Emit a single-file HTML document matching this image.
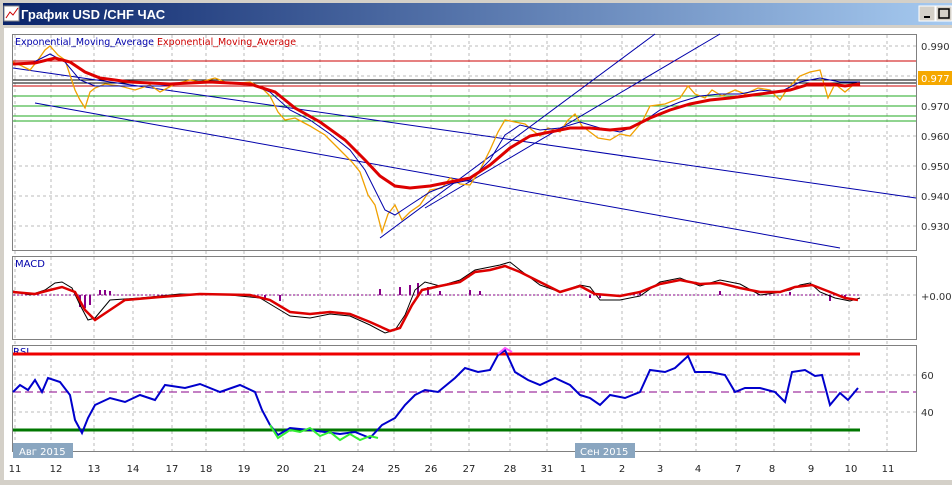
<!DOCTYPE html>
<html><head><meta charset="utf-8"><style>
body{margin:0;width:952px;height:485px;overflow:hidden;background:#d4d0c8;font-family:"Liberation Sans",sans-serif}
</style></head><body>
<svg width="952" height="485" xmlns="http://www.w3.org/2000/svg" style="position:absolute;left:0;top:0">
<defs><linearGradient id="tb" x1="0" x2="1"><stop offset="0" stop-color="#0a246a"/><stop offset="1" stop-color="#a6caf0"/></linearGradient></defs>
<rect x="0" y="0" width="952" height="485" fill="#d4d0c8"/>
<rect x="3" y="3" width="949" height="22" fill="url(#tb)"/>
<rect x="4" y="6" width="15" height="15" fill="#fff" stroke="#888"/>
<path d="M6 18 L10 12 L13 15 L18 8" stroke="#c00" fill="none"/>
<text x="21" y="19" font-size="13" font-weight="bold" fill="#fff" font-family="Liberation Sans,sans-serif">График USD /CHF  ЧАС</text>
<rect x="919" y="6" width="16" height="15" fill="#d4d0c8" stroke="#fff"/><rect x="924" y="16" width="6" height="2" fill="#000"/>
<rect x="936" y="6" width="16" height="15" fill="#d4d0c8" stroke="#fff"/><rect x="939" y="9" width="10" height="9" fill="none" stroke="#000" stroke-width="1.5"/>
<rect x="4" y="28" width="948" height="452" fill="#fff"/>
<g stroke="#808080" fill="none"><rect x="12.5" y="34.5" width="904" height="216"/><rect x="12.5" y="256.5" width="904" height="83"/><rect x="12.5" y="345.5" width="904" height="106"/></g>
<g stroke="#bbb" stroke-dasharray="3,3">
<path d="M15 35V451M51 35V451M94 35V451M133 35V451M172 35V451M206 35V451M244 35V451M283 35V451M320 35V451M358 35V451M394 35V451M431 35V451M469 35V451M510 35V451M547 35V451M581 35V451M622 35V451M660 35V451M696 35V451M736 35V451M774 35V451M811 35V451M849 35V451M887 35V451"/>
<path d="M13 46H916M13 76H916M13 106H916M13 136H916M13 166H916M13 196H916M13 226H916M13 295H916M13 375H916M13 412H916"/>
</g>
<g stroke-width="1">
<path d="M13 61H916M13 86H916" stroke="#c00"/>
<path d="M13 80H916M13 83H916" stroke="#000"/>
<path d="M13 96H916M13 106H916M13 116H916M13 121H916" stroke="#2a2"/>
<path d="M13 68L916 198M35 103L840 248M380 238L655 34M425 208L720 34" stroke="#00a"/>
</g>
<polyline fill="none" stroke="#f0a000" stroke-width="1.3" points="13,62 22,66 30,70 38,60 45,50 50,46 58,55 65,60 70,75 75,90 80,100 85,108 90,92 95,88 105,84 120,86 135,90 150,85 160,92 175,84 190,80 200,82 215,78 230,84 250,82 262,88 270,96 278,112 285,120 295,118 310,126 325,135 340,150 352,162 360,172 368,195 375,205 382,232 388,214 395,205 402,220 410,212 420,205 430,190 442,188 450,178 460,184 470,185 480,170 490,150 498,132 505,120 515,122 525,124 532,130 540,136 548,128 560,132 568,120 575,114 582,126 590,132 598,138 610,140 620,134 630,136 642,122 650,106 665,104 680,98 688,86 695,94 705,98 712,90 722,96 735,90 745,94 758,88 770,90 780,100 788,88 800,76 810,72 820,70 828,98 835,84 845,92 852,86 860,82"/>
<polyline fill="none" stroke="#00a" stroke-width="1" points="13,64 30,64 50,54 65,62 80,80 95,86 120,86 160,86 200,82 250,84 270,92 290,110 310,120 330,134 350,150 365,170 375,190 385,210 395,215 410,205 430,192 450,184 470,180 490,160 505,135 520,125 540,130 560,128 580,122 600,128 620,132 640,124 660,110 680,102 700,96 720,94 740,94 760,90 780,92 800,82 820,78 840,82 860,82"/>
<polyline fill="none" stroke="#d00" stroke-width="3" points="13,64 35,63 55,58 70,62 85,72 100,78 130,82 170,84 210,82 250,84 275,92 295,108 320,122 345,140 365,160 380,176 395,186 410,188 430,186 450,182 470,178 490,165 510,148 530,136 550,132 570,128 590,128 610,130 630,128 650,118 670,110 690,104 710,100 730,98 760,94 790,90 810,84 830,84 845,86 860,84"/>
<rect x="918" y="71" width="34" height="14" fill="#f5a800"/>
<g font-family="DejaVu Sans,sans-serif" font-size="10" fill="#333">
<text x="921" y="50">0.990</text><text x="921" y="82" fill="#fff">0.977</text><text x="921" y="110">0.970</text><text x="921" y="140">0.960</text><text x="921" y="170">0.950</text><text x="921" y="200">0.940</text><text x="921" y="230">0.930</text>
<text x="921" y="300">+0.00</text><text x="921" y="379">60</text><text x="921" y="416">40</text></g>
<text x="15" y="45" font-family="DejaVu Sans,sans-serif" font-size="9.5" fill="#00a">Exponential_Moving_Average <tspan fill="#c00">Exponential_Moving_Average</tspan></text>
<text x="15" y="267" font-family="DejaVu Sans,sans-serif" font-size="10" fill="#00a">MACD</text>
<text x="13" y="355" font-family="DejaVu Sans,sans-serif" font-size="10" fill="#00a">RSI</text>
<path d="M13 295H860" stroke="#808" stroke-dasharray="2,2"/>
<path d="M80 295v12M85 295v13M90 295v10M100 295v-5M105 295v-5M110 295v-4M265 295v5M280 295v6M380 295v-6M400 295v-8M410 295v-10M418 295v-12M428 295v-8M440 295v-4M470 295v-5M480 295v-4M590 295v3M600 295v3M640 295v-3M720 295v-4M790 295v-3M830 295v6M845 295v4" stroke="#808" stroke-width="2"/>
<polyline fill="none" stroke="#000" points="13,291 30,295 45,290 55,283 62,282 72,288 80,305 88,320 95,318 110,300 140,298 180,294 230,295 260,298 280,310 290,316 310,318 330,314 350,316 370,325 385,333 395,330 405,315 415,290 425,282 440,286 460,280 475,270 485,268 500,265 510,262 520,270 540,285 560,292 580,285 590,287 600,300 620,300 640,296 660,282 680,278 700,286 720,280 740,284 760,295 775,293 790,290 800,285 810,283 820,292 835,298 850,301 860,298"/>
<polyline fill="none" stroke="#d00" stroke-width="2.5" points="13,292 35,294 50,290 62,287 75,292 85,310 95,320 110,310 125,300 160,297 200,294 250,295 270,300 290,312 310,314 330,312 350,314 370,322 390,331 400,328 412,305 422,290 440,286 460,282 475,272 490,270 505,266 520,272 540,282 560,292 580,286 595,294 620,296 640,292 660,284 680,280 700,284 720,283 740,288 760,292 780,292 795,287 812,285 830,292 845,298 858,300"/>
<path d="M13 354H860" stroke="#e00" stroke-width="3"/>
<path d="M13 430H860" stroke="#070" stroke-width="3"/>
<path d="M13 392H916" stroke="#808" stroke-dasharray="8,4"/>
<polyline fill="none" stroke="#00c" stroke-width="2" points="13,392 20,385 28,390 35,380 42,392 48,378 60,382 70,395 75,420 82,433 88,418 95,405 110,398 125,402 140,395 155,400 165,385 185,388 200,384 220,392 240,385 255,392 262,410 270,425 278,435 290,428 310,430 325,432 340,434 355,432 370,438 382,425 395,418 405,405 415,395 425,390 438,392 455,378 465,368 478,372 490,370 498,355 505,350 515,372 528,380 540,385 555,378 570,385 580,395 590,398 600,405 610,395 625,398 640,392 650,370 665,372 675,368 688,356 695,372 710,372 725,375 735,392 745,388 760,388 775,392 785,402 792,372 805,370 815,376 822,375 830,405 840,393 848,400 858,388"/>
<polyline fill="none" stroke="#3e3" stroke-width="2" points="270,425 278,438 290,430 300,432 310,428 320,436 330,432 340,440 350,434 360,440 370,436 378,438"/>
<polyline fill="none" stroke="#f5f" stroke-width="2" points="498,354 505,348 512,352"/>
<rect x="13" y="443" width="60" height="15" fill="#8aa6c0"/><text x="19" y="455" font-size="10" fill="#fff" font-family="DejaVu Sans,sans-serif">Авг 2015</text>
<rect x="575" y="443" width="60" height="15" fill="#8aa6c0"/><text x="580" y="455" font-size="10" fill="#fff" font-family="DejaVu Sans,sans-serif">Сен 2015</text>
<g font-family="DejaVu Sans,sans-serif" font-size="10" fill="#222" text-anchor="middle">
<text x="15" y="472">11</text><text x="56" y="472">12</text><text x="94" y="472">13</text><text x="133" y="472">14</text><text x="172" y="472">17</text><text x="206" y="472">18</text><text x="244" y="472">19</text><text x="283" y="472">20</text><text x="320" y="472">21</text><text x="358" y="472">24</text><text x="394" y="472">25</text><text x="431" y="472">26</text><text x="469" y="472">27</text><text x="510" y="472">28</text><text x="547" y="472">31</text><text x="583" y="472">1</text><text x="622" y="472">2</text><text x="660" y="472">3</text><text x="698" y="472">4</text><text x="738" y="472">7</text><text x="772" y="472">8</text><text x="811" y="472">9</text><text x="851" y="472">10</text><text x="888" y="472">11</text></g>
</svg>
</body></html>
